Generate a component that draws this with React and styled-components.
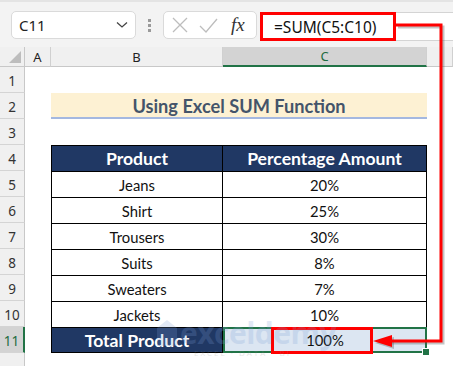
import React from 'react'
import styled, { createGlobalStyle } from 'styled-components'

const GlobalStyle = createGlobalStyle`
  html, body { margin: 0; padding: 0; background: #fff; }
  body {
    width: 453px;
    height: 366px;
    overflow: hidden;
    position: relative;
    font-family: "Noto Sans", "Open Sans", sans-serif;
  }
`

const rows = [
  { n: 1 },
  { n: 2, kind: 'title' },
  { n: 3 },
  { n: 4, kind: 'head', b: 'Product', c: 'Percentage Amount' },
  { n: 5, kind: 'data', b: 'Jeans', c: '20%' },
  { n: 6, kind: 'data', b: 'Shirt', c: '25%' },
  { n: 7, kind: 'data', b: 'Trousers', c: '30%' },
  { n: 8, kind: 'data', b: 'Suits', c: '8%' },
  { n: 9, kind: 'data', b: 'Sweaters', c: '7%' },
  { n: 10, kind: 'data', b: 'Jackets', c: '10%' },
  { n: 11, kind: 'total', b: 'Total Product', c: '100%' },
  { n: 12, hidden: true },
]

const Toolbar = styled.div`
  height: 47px;
  box-sizing: border-box;
  background: #f3f3f3;
  border-top: 2px solid #e4e4e4;
  display: flex;
  align-items: flex-start;
  padding: 9px 0 0 11px;
`

const NameBox = styled.div`
  width: 125px;
  height: 28px;
  box-sizing: border-box;
  background: #fff;
  border: 1px solid #dadada;
  border-radius: 5px;
  display: flex;
  align-items: center;
  justify-content: space-between;
  padding: 0 7px 0 7px;
  font-size: 15px;
  color: #222;
`

const Dots = styled.div`
  width: 27px;
  height: 28px;
  display: flex;
  flex-direction: column;
  align-items: center;
  justify-content: center;
  gap: 2px;
  span {
    width: 3px;
    height: 3px;
    background: #9a9a9a;
  }
`

const FuncBox = styled.div`
  width: 94px;
  height: 28px;
  box-sizing: border-box;
  background: #fff;
  border: 1px solid #dadada;
  border-radius: 5px;
  display: flex;
  align-items: center;
  padding: 0 0 0 8px;
  gap: 11px;
`

const Fx = styled.span`
  font-family: "Liberation Serif", "DejaVu Serif", serif;
  font-style: italic;
  font-size: 19px;
  color: #333;
  margin-left: 2px;
`

const FormulaBar = styled.div`
  flex: 1;
  height: 27px;
  margin-left: 3px;
  margin-top: 1px;
  background: #fff;
  border-top: 1px solid #d4d4d4;
  border-bottom: 1px solid #d4d4d4;
  position: relative;
`

const FormulaMark = styled.div`
  position: absolute;
  left: 0;
  top: -1px;
  width: 136px;
  height: 29px;
  box-sizing: border-box;
  border: 3px solid #ff0000;
  display: flex;
  align-items: center;
  padding-left: 11px;
  font-size: 15.5px;
  color: #111;
`

const Sheet = styled.div`
  display: grid;
  grid-template-columns: 25px 26px 172px 204px 1fr;
  grid-template-rows: 20px;
  grid-auto-rows: 26px;
  font-family: Lato, "Open Sans", sans-serif;
`

const Corner = styled.div`
  background: #f0f0f0;
  border-right: 1px solid #c8c8c8;
  border-bottom: 1px solid #c8c8c8;
  box-sizing: border-box;
  position: relative;
  &::after {
    content: '';
    position: absolute;
    right: 3px;
    bottom: 3px;
    border-left: 12px solid transparent;
    border-bottom: 12px solid #bdbdbd;
  }
`

const ColHead = styled.div`
  background: ${p => (p.$active ? '#d3d3d3' : '#f0f0f0')};
  color: ${p => (p.$active ? '#1e6b3f' : '#222')};
  border-right: 1px solid #d0d0d0;
  border-bottom: ${p => (p.$active ? '2px solid #217346' : '1px solid #c8c8c8')};
  box-sizing: border-box;
  font-family: "Noto Sans", sans-serif;
  font-size: 13px;
  display: flex;
  align-items: center;
  justify-content: center;
`

const RowHead = styled.div`
  background: ${p => (p.$active ? '#d3d3d3' : '#f0f0f0')};
  color: ${p => (p.$active ? '#1e6b3f' : '#333')};
  border-right: ${p => (p.$active ? '2px solid #217346' : '1px solid #c8c8c8')};
  border-bottom: 1px solid #d4d4d4;
  box-sizing: border-box;
  font-family: "Noto Sans", sans-serif;
  font-size: 13.5px;
  display: flex;
  align-items: flex-end;
  justify-content: center;
  padding-bottom: 2px;
`

const Blank = styled.div`
  grid-column: 2 / -1;
  background: #fff;
`

const Gap = styled.div`
  background: #fff;
`

const Title = styled.div`
  grid-column: 3 / 5;
  background: #fdf1d3;
  border-bottom: 2px solid #a4b8e0;
  color: #44546a;
  font-weight: 700;
  font-size: 18.2px;
  display: flex;
  align-items: center;
  justify-content: center;
  padding-top: 1px;
`

const Cell = styled.div`
  box-sizing: border-box;
  border-top: 1px solid #000;
  border-right: 1px solid #000;
  border-left: ${p => (p.$first ? '1px solid #000' : 'none')};
  border-bottom: ${p => (p.$last ? '1px solid #000' : 'none')};
  background: ${p => (p.$dark ? '#203864' : '#fff')};
  color: ${p => (p.$dark ? '#fff' : '#111')};
  font-weight: ${p => (p.$bold ? 700 : 400)};
  font-size: ${p => (p.$bold ? '17.6px' : '14.8px')};
  display: flex;
  align-items: center;
  justify-content: center;
  position: relative;
`

const Selected = styled.div`
  grid-column: 4;
  box-sizing: border-box;
  border: 2px solid #217346;
  background: #dce6f2;
  color: #111;
  font-size: 14.8px;
  display: flex;
  align-items: center;
  justify-content: center;
  position: relative;
  &::after {
    content: '';
    position: absolute;
    right: -5px;
    bottom: -5px;
    width: 6px;
    height: 6px;
    background: #217346;
    border: 1px solid #fff;
  }
`

const ResultMark = styled.div`
  position: absolute;
  left: 46px;
  top: -2px;
  width: 102px;
  height: 27px;
  box-sizing: border-box;
  border: 3px solid #ff0000;
`

const Watermark = styled.div`
  position: absolute;
  left: 156px;
  top: 318px;
  display: flex;
  align-items: flex-start;
  gap: 2px;
  opacity: 0.22;
  pointer-events: none;
  color: #7d9fd6;
`

const WmText = styled.div`
  display: flex;
  flex-direction: column;
  font-family: "Open Sans", sans-serif;
  b {
    font-size: 30px;
    font-weight: 700;
    line-height: 30px;
    letter-spacing: -0.5px;
  }
  small {
    font-size: 8px;
    letter-spacing: 2px;
    color: #8a8a8a;
    margin-left: 14px;
    line-height: 10px;
  }
`

const Overlay = styled.svg`
  position: absolute;
  left: 0;
  top: 0;
  pointer-events: none;
`

function Chevron() {
  return (
    <svg width="12" height="8" viewBox="0 0 12 8">
      <path d="M1 1.5 L6 6 L11 1.5" fill="none" stroke="#444" strokeWidth="1.3" />
    </svg>
  )
}

function Cross() {
  return (
    <svg width="16" height="16" viewBox="0 0 16 16">
      <path d="M1 1 L15 15 M15 1 L1 15" stroke="#bdbdbd" strokeWidth="1.3" />
    </svg>
  )
}

function Check() {
  return (
    <svg width="19" height="15" viewBox="0 0 19 15">
      <path d="M1 8 L7 14 L18 1" fill="none" stroke="#bdbdbd" strokeWidth="1.3" />
    </svg>
  )
}

function renderRow(r) {
  const active = r.n === 11
  // row 12 only peeks in at the bottom edge, its number stays below the fold
  const head = <RowHead key={'h' + r.n} $active={active}>{r.hidden ? '' : r.n}</RowHead>
  if (!r.kind) return [head, <Blank key={'e' + r.n} />]
  if (r.kind === 'title') {
    return [
      head,
      <Gap key={'a' + r.n} />,
      <Title key={'t' + r.n}>Using Excel SUM Function</Title>,
      <Gap key={'d' + r.n} />,
    ]
  }
  const dark = r.kind === 'head'
  const last = r.kind === 'total'
  return [
    head,
    <Gap key={'a' + r.n} />,
    <Cell key={'b' + r.n} $first $dark={dark || last} $bold={dark || last} $last={last}>
      {r.b}
    </Cell>,
    last ? (
      <Selected key={'c' + r.n}>
        {r.c}
        <ResultMark />
      </Selected>
    ) : (
      <Cell key={'c' + r.n} $dark={dark} $bold={dark}>
        {r.c}
      </Cell>
    ),
    <Gap key={'d' + r.n} />,
  ]
}

export default function App() {
  return (
    <>
      <GlobalStyle />
      <Toolbar>
        <NameBox>
          <span>C11</span>
          <Chevron />
        </NameBox>
        <Dots>
          <span />
          <span />
          <span />
        </Dots>
        <FuncBox>
          <Cross />
          <Check />
          <Fx>fx</Fx>
        </FuncBox>
        <FormulaBar>
          <FormulaMark>=SUM(C5:C10)</FormulaMark>
        </FormulaBar>
      </Toolbar>
      <Sheet>
        <Corner />
        <ColHead>A</ColHead>
        <ColHead>B</ColHead>
        <ColHead $active>C</ColHead>
        <ColHead />
        {rows.map(renderRow)}
      </Sheet>
      <Watermark>
        <svg width="22" height="30" viewBox="0 0 22 30">
          <path d="M1 10 L11 2 L21 10 V28 H1 Z" fill="#7d9fd6" />
        </svg>
        <WmText>
          <b>exceldemy</b>
          <small>EXCEL · DATA · BI</small>
        </WmText>
      </Watermark>
      <Overlay width="453" height="366">
        <g stroke="#555" strokeOpacity="0.35" strokeWidth="3" fill="none">
          <path d="M398 27 H443 V343 H392" />
        </g>
        <polygon points="375,343 394,337 394,349" fill="#555" fillOpacity="0.35" />
        <g stroke="#ff0000" strokeWidth="3" fill="none">
          <path d="M396 25 H441 V341 H390" />
        </g>
        <polygon points="373,341 392,335 392,347" fill="#ff0000" />
      </Overlay>
    </>
  )
}
